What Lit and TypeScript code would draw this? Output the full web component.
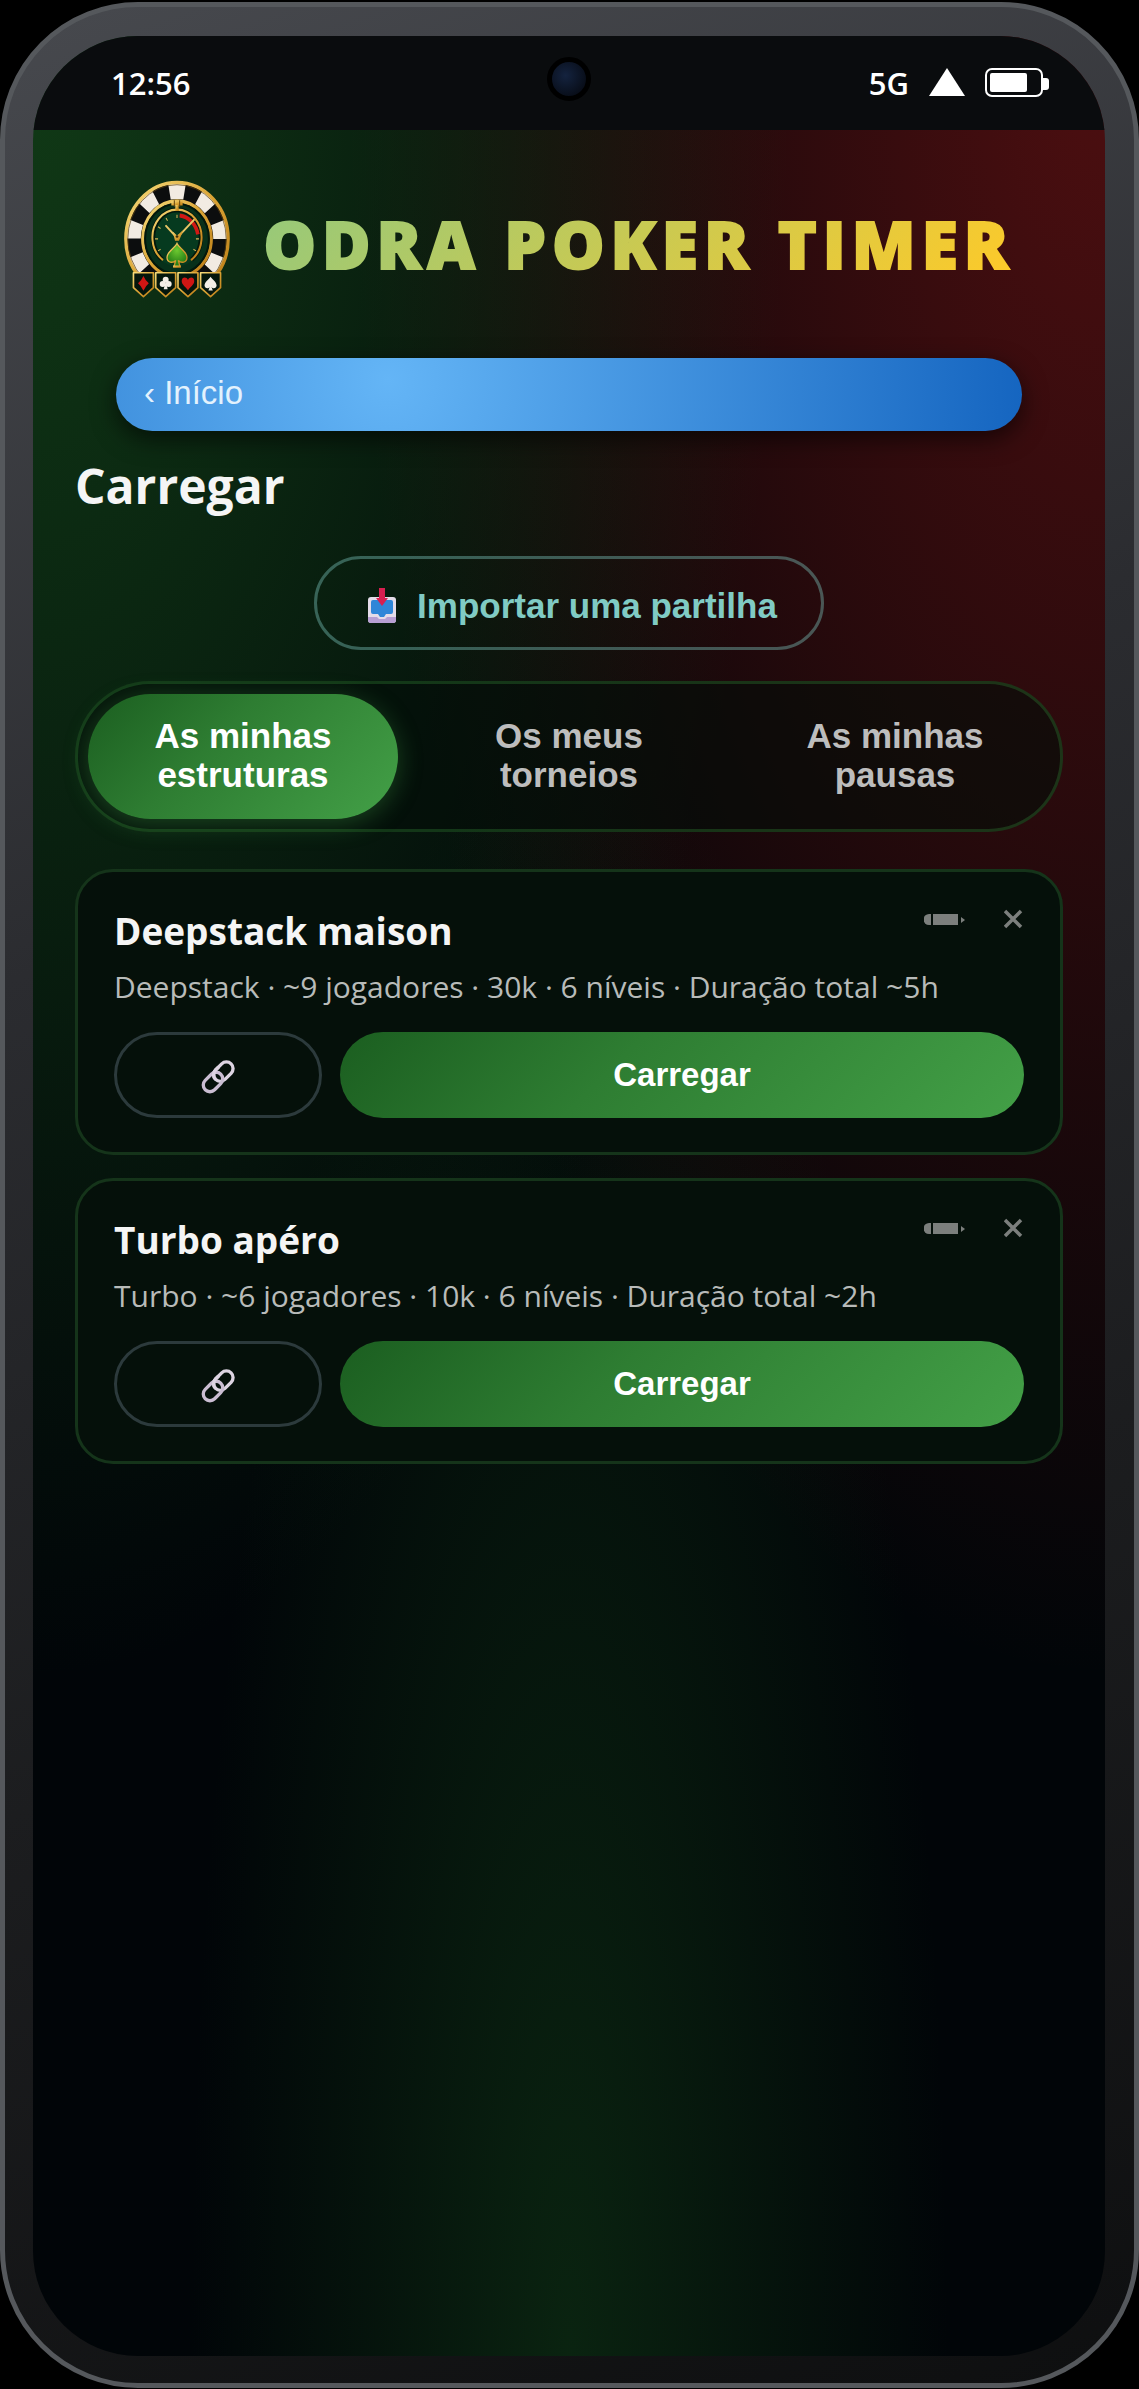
import { LitElement, html, css, svg } from "lit";
import { customElement, property, state } from "lit/decorators.js";
import { classMap } from "lit/directives/class-map.js";

interface Structure {
  name: string;
  summary: string;
}

const TABS = ["As minhas estruturas", "Os meus torneios", "As minhas pausas"];

const STRUCTURES: Structure[] = [
  {
    name: "Deepstack maison",
    summary: "Deepstack · ~9 jogadores · 30k · 6 níveis · Duração total ~5h",
  },
  {
    name: "Turbo apéro",
    summary: "Turbo · ~6 jogadores · 10k · 6 níveis · Duração total ~2h",
  },
];

const SPADE =
  "M0 -12C3 -7 11 -3 11 4C11 9 4 11 1.500 6L4 13H-4L-1.500 6C-4 11 -11 9 -11 4C-11 -3 -3 -7 0 -12Z";
const HEART =
  "M0 14C-4 7 -13 3 -13 -5C-13 -13 -3 -14 0 -7C3 -14 13 -13 13 -5C13 3 4 7 0 14Z";
const DIAMOND = "M0 -15Q5 -5 12 0Q5 5 0 15Q-5 5 -12 0Q-5 -5 0 -15Z";

@customElement("poker-logo")
export class PokerLogo extends LitElement {
  static styles = css`
    :host {
      display: block;
      flex: none;
    }
    .logo {
      display: block;
      width: 108px;
      height: 118px;
    }
  `;

  private shield(x: number, suit: unknown) {
    return svg`<g transform="translate(${x} 342)">
      <path d="M-30 -32H30V13L0 40L-30 13Z" fill="#04160c" stroke="url(#gold)" stroke-width="5" stroke-linejoin="round" />
      ${suit}
    </g>`;
  }

  render() {
    const ticks = [270, 300, 330, 0, 90, 240, 120];
    return html`
      <svg class="logo" viewBox="46 31 322 355" role="img" aria-label="Odra Poker Timer">
        <defs>
          <linearGradient id="gold" x1="0" y1="0" x2="1" y2="1">
            <stop offset="0" stop-color="#f7dc7c" />
            <stop offset="0.5" stop-color="#d9a233" />
            <stop offset="1" stop-color="#b97a16" />
          </linearGradient>
          <radialGradient id="leaf" cx="0.5" cy="0.3" r="0.7">
            <stop offset="0" stop-color="#6cc830" />
            <stop offset="1" stop-color="#1c7412" />
          </radialGradient>
          <clipPath id="top"><rect x="40" y="20" width="340" height="292" /></clipPath>
        </defs>
        <g clip-path="url(#top)">
          <g transform="translate(207 208) scale(1 1.1)">
            <circle r="130" fill="none" stroke="#0c0d0e" stroke-width="48" />
            <circle r="131" fill="none" stroke="#f2ebe2" stroke-width="44" pathLength="18" stroke-dasharray="1 1" transform="rotate(-100)" />
            <circle r="154" fill="none" stroke="url(#gold)" stroke-width="10" />
            <circle r="148" fill="none" stroke="#5e4211" stroke-width="2" />
            <circle r="103" fill="#07301a" stroke="url(#gold)" stroke-width="10" />
            <circle r="96" fill="none" stroke="#03170b" stroke-width="6" />
            <circle r="75" fill="#063a1f" />
            <path d="M-44 57A72 76 0 1 1 44 57" fill="none" stroke="#03170b" stroke-width="13" />
            <path d="M-44 57A74 76 0 1 1 44 57" fill="none" stroke="url(#gold)" stroke-width="6" stroke-linecap="round" />
            <path d="M8 -64A64 64 0 0 1 63 -12" fill="none" stroke="#d01814" stroke-width="11" />
            ${ticks.map(
              (a) => svg`<path d="M0 -66V-57" stroke="#d9b757" stroke-width="3" transform="rotate(${a})" />`,
            )}
          </g>
          <path d="M190 96H224V108H190Z" fill="url(#gold)" />
          <path d="M199 92V112M215 92V112" stroke="#5e4211" stroke-width="3" />
          <path d="M202 106H212V124H202Z" fill="url(#gold)" />
          <path d="M207 205L258 151M207 205L174 169" stroke="#e7c566" stroke-width="6" stroke-linecap="round" />
          <path d="M194 186L207 198L226 182L213 214H201Z" fill="url(#gold)" />
          <circle cx="207" cy="201" r="4" fill="#3b2a0a" />
          <path d="M207 222C213 236 237 246 237 264C237 280 219 282 211 273L216 292H198L203 273C195 282 177 280 177 264C177 246 201 236 207 222Z" fill="url(#leaf)" stroke="url(#gold)" stroke-width="4" />
          <path d="M195 288H219V294H195Z" fill="url(#gold)" />
        </g>
        ${this.shield(106, svg`<path d=${DIAMOND} transform="scale(1.35 1.5)" fill="#cf1614" />`)}
        ${this.shield(
          173,
          svg`<g fill="#f4eee6"><circle cy="-11" r="9" /><circle cx="-9" cy="2" r="9" /><circle cx="9" cy="2" r="9" /><path d="M0 -6L6 18H-6Z" /></g>`,
        )}
        ${this.shield(240, svg`<path d=${HEART} transform="scale(1.45 1.5)" fill="#cf1614" />`)}
        ${this.shield(308, svg`<path d=${SPADE} transform="scale(1.65)" fill="#f4eee6" />`)}
      </svg>
    `;
  }
}

@customElement("status-bar")
export class StatusBar extends LitElement {
  static styles = css`
    :host {
      display: grid;
      grid-template-columns: 1fr auto 1fr;
      align-items: center;
      height: 94px;
      padding: 0 56px;
      background: #0a0c0e;
      color: #fff;
      font: 600 31px/40px "Open Sans", "Noto Sans", sans-serif;
      box-sizing: border-box;
    }
    .time {
      padding-left: 22px;
    }
    .camera {
      width: 44px;
      height: 44px;
      margin-bottom: 8px;
      box-sizing: border-box;
      border: 5px solid #000;
      border-radius: 50%;
      background: radial-gradient(circle at 40% 40%, #14233f, #080d18 75%);
    }
    .right {
      display: flex;
      align-items: center;
      justify-content: flex-end;
      gap: 20px;
    }
    .signal {
      width: 36px;
      height: 28px;
      margin-bottom: 2px;
    }
    .battery {
      width: 64px;
      height: 30px;
      margin-bottom: 2px;
    }
  `;

  render() {
    return html`
      <span class="time">12:56</span>
      <span class="camera"></span>
      <div class="right">
        <span>5G</span>
        <svg class="signal" viewBox="0 0 36 28" aria-hidden="true"><path d="M18 0L36 28H0Z" fill="#fff" /></svg>
        <svg class="battery" viewBox="0 0 64 30" aria-hidden="true">
          <rect x="1" y="2" width="56" height="27" rx="6" fill="none" stroke="#fff" stroke-width="2" />
          <rect x="5" y="6" width="37" height="19" rx="2" fill="#fff" />
          <path d="M58 11H61Q64 11 64 14V20Q64 23 61 23H58Z" fill="#fff" />
        </svg>
      </div>
    `;
  }
}

@customElement("structure-card")
export class StructureCard extends LitElement {
  @property({ attribute: false }) item!: Structure;

  static styles = css`
    :host {
      display: block;
    }
    .card {
      display: flex;
      flex-direction: column;
      padding: 36px 36px 34px;
      border: 3px solid #15341a;
      border-radius: 38px;
      background: #05100a;
    }
    .head {
      display: flex;
      align-items: flex-start;
      justify-content: space-between;
    }
    .name {
      margin: 0;
      color: #f5f5f5;
      font: 700 37px/46px "Open Sans", "Noto Sans", sans-serif;
    }
    .tools {
      display: flex;
      gap: 38px;
    }
    .tool {
      padding: 0;
      border: 0;
      background: none;
      line-height: 0;
      cursor: pointer;
    }
    .pencil {
      width: 42px;
      height: 22px;
    }
    .cross {
      width: 20px;
      height: 22px;
    }
    .summary {
      margin: 13px 0 25px;
      color: #b8bbb9;
      font: 400 30px/40px "Open Sans", "Noto Sans", sans-serif;
    }
    .actions {
      display: grid;
      grid-template-columns: 208px 1fr;
      gap: 18px;
    }
    .btn {
      height: 86px;
      padding: 0;
      box-sizing: border-box;
      border-radius: 43px;
      font: 700 33px/38px "Liberation Sans", Arial, sans-serif;
      cursor: pointer;
    }
    .share {
      display: flex;
      align-items: center;
      justify-content: center;
      border: 3px solid #2c3a3c;
      background: transparent;
    }
    .link {
      width: 34px;
      height: 34px;
      margin-top: 4px;
    }
    .load {
      border: 0;
      color: #fff;
      background: linear-gradient(135deg, #1b5e20, #2e7d32 40%, #43a047);
    }
  `;

  render() {
    return html`
      <article class="card">
        <div class="head">
          <h2 class="name">${this.item.name}</h2>
          <div class="tools">
            <button class="tool" aria-label="Editar">
              <svg class="pencil" viewBox="0 0 42 22">
                <g fill="#7c7f7d">
                  <path d="M7 6V17H5A5 5 0 0 1 5 6Z" />
                  <rect x="9" y="6" width="25" height="11" />
                  <path d="M37 9L41 12L37 15Z" />
                </g>
              </svg>
            </button>
            <button class="tool" aria-label="Eliminar">
              <svg class="cross" viewBox="0 0 20 22">
                <path d="M1 3L17 19M17 3L1 19" stroke="#7c7f7d" stroke-width="3.500" fill="none" />
              </svg>
            </button>
          </div>
        </div>
        <p class="summary">${this.item.summary}</p>
        <div class="actions">
          <button class="btn share" aria-label="Partilhar">
            <svg class="link" viewBox="0 0 102 102" fill="none" stroke-width="10">
              <rect x="-33" y="-20" width="66" height="40" rx="20" transform="translate(67 35) rotate(-45)" stroke="#ddd4e2" />
              <rect x="-33" y="-20" width="66" height="40" rx="20" transform="translate(36 66) rotate(-45)" stroke="#cabdd2" />
              <path d="M-33 0A20 20 0 0 1 -13 -20H0" transform="translate(67 35) rotate(-45)" stroke="#ddd4e2" />
            </svg>
          </button>
          <button class="btn load">Carregar</button>
        </div>
      </article>
    `;
  }
}

@customElement("app-root")
export class AppRoot extends LitElement {
  @state() private active = 0;

  static styles = css`
    :host {
      display: flex;
      min-height: 100vh;
      padding: 2px 0 1px;
      box-sizing: border-box;
      background: #000;
    }
    .phone {
      display: flex;
      flex: 1;
      min-width: 0;
      padding: 29px 29px 27px 28px;
      border: 5px solid #55585c;
      border-radius: 138px;
      background: linear-gradient(160deg, #47494e, #2b2c30 35%, #1c1d1f 65%, #0e0f10);
    }
    .screen {
      flex: 1;
      min-width: 0;
      overflow: hidden;
      border-radius: 105px;
      background:
        radial-gradient(ellipse at 0 0, rgba(27, 94, 32, 0.6), transparent 50%),
        radial-gradient(ellipse at 100% 0, rgba(183, 28, 28, 0.42), transparent 50%),
        radial-gradient(ellipse at 50% 100%, rgba(27, 94, 32, 0.34), transparent 50%),
        #010508;
    }
    .content {
      display: flex;
      flex-direction: column;
      padding: 50px 42px;
    }
    .brand {
      display: flex;
      align-items: center;
      justify-content: center;
      gap: 32px;
      margin-bottom: 60px;
    }
    .brand-name {
      margin: 8px 0 0;
      font: 800 66px/84px "Open Sans", "Noto Sans", sans-serif;
      letter-spacing: 6px;
      white-space: nowrap;
      color: transparent;
      -webkit-text-stroke: 2px transparent;
      background: linear-gradient(135deg, #95c97b, #ffca28);
      background-clip: text;
      -webkit-background-clip: text;
    }
    .back {
      display: block;
      margin: 0 41px;
      padding: 16px 28px 19px;
      border-radius: 37px;
      color: #e3f2fd;
      background: radial-gradient(circle at 30% 30%, #64b5f6, #1565c0);
      box-shadow: 0 8px 24px rgba(0, 0, 0, 0.6);
      font: 400 33px/38px "Liberation Sans", Arial, sans-serif;
      text-decoration: none;
    }
    .title {
      margin: 22px 0 37px;
      color: #f5f5f5;
      font: 700 48px/66px "Open Sans", "Noto Sans", sans-serif;
    }
    .import {
      display: flex;
      align-items: center;
      align-self: center;
      gap: 20px;
      padding: 29px 44px 23px 50px;
      border: 3px solid rgba(128, 203, 196, 0.4);
      border-radius: 47px;
      color: #80cbc4;
      background: transparent;
      font: 700 35px/34px "Liberation Sans", Arial, sans-serif;
      cursor: pointer;
    }
    .inbox {
      width: 30px;
      height: 36px;
    }
    .tabs {
      display: grid;
      grid-template-columns: repeat(3, 1fr);
      gap: 16px;
      margin: 31px 0 37px;
      padding: 10px;
      border: 3px solid rgba(46, 125, 50, 0.36);
      border-radius: 75px;
      background: rgba(4, 13, 9, 0.6);
    }
    .tab {
      padding: 22px 36px 25px;
      border: 0;
      border-radius: 63px;
      color: #bdbdbd;
      background: transparent;
      font: 700 35px/39px "Liberation Sans", Arial, sans-serif;
      cursor: pointer;
    }
    .tab.active {
      color: #fff;
      background: linear-gradient(135deg, #1b5e20, #2e7d32 40%, #43a047);
      box-shadow: 0 5px 24px rgba(67, 160, 71, 0.35);
    }
    .list {
      display: flex;
      flex-direction: column;
      gap: 23px;
    }
  `;

  render() {
    return html`
      <div class="phone">
        <div class="screen">
          <status-bar></status-bar>
          <main class="content">
            <header class="brand">
              <poker-logo></poker-logo>
              <p class="brand-name">ODRA POKER TIMER</p>
            </header>
            <a class="back" href="#">‹ Início</a>
            <h1 class="title">Carregar</h1>
            <button class="import">
              <svg class="inbox" viewBox="0 0 30 36" aria-hidden="true">
                <rect x="1" y="9" width="28" height="26" rx="3" fill="#e4dce9" />
                <path d="M1 29H10L12 31H18L20 29H29V32Q29 35 26 35H4Q1 35 1 32Z" fill="#b79fd3" />
                <path d="M6 12H24Q26 12 26 14V24Q26 26 24 26H19L17 29H13L11 26H6Q4 26 4 24V14Q4 12 6 12Z" fill="#2f86d8" />
                <path d="M12 0H18V10H21L15 18L9 10H12Z" fill="#d81f50" />
              </svg>
              Importar uma partilha
            </button>
            <div class="tabs" role="tablist">
              ${TABS.map(
                (label, i) => html`<button
                  class=${classMap({ tab: true, active: i === this.active })}
                  role="tab"
                  aria-selected=${i === this.active}
                  @click=${() => (this.active = i)}
                >${label}</button>`,
              )}
            </div>
            <section class="list">
              ${STRUCTURES.map((item) => html`<structure-card .item=${item}></structure-card>`)}
            </section>
          </main>
        </div>
      </div>
    `;
  }
}
